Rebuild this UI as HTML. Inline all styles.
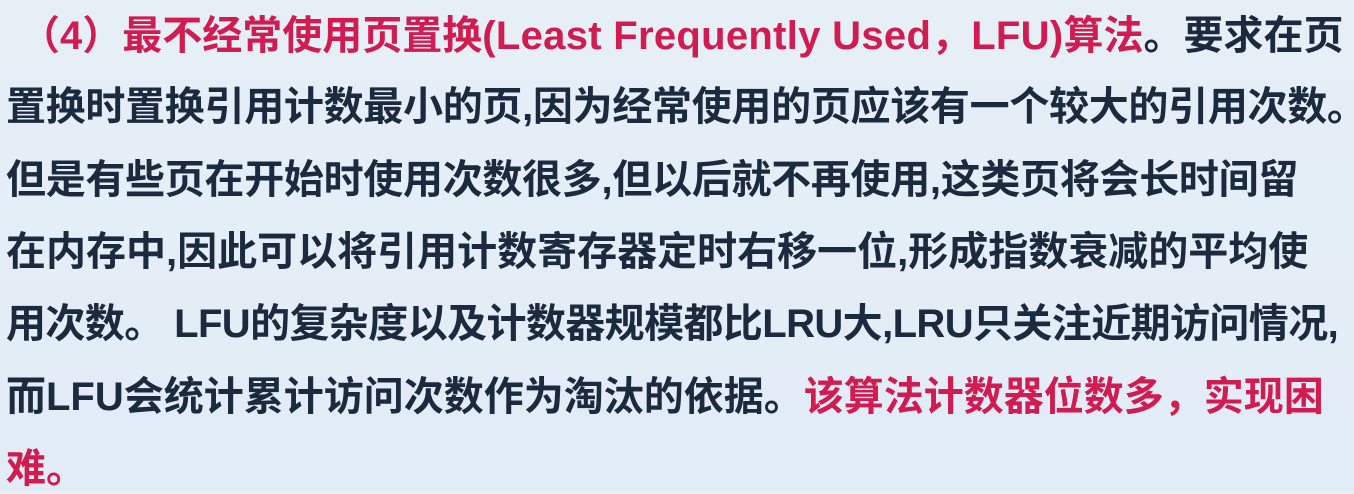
<!DOCTYPE html>
<html><head><meta charset="utf-8"><style>
body{margin:0;width:1354px;height:490px;overflow:hidden;background:linear-gradient(#e6eff6,#e2ecf6);}
.l{position:absolute;left:6px;white-space:nowrap;font-family:"Liberation Sans","Noto Sans CJK SC",sans-serif;font-weight:bold;font-size:40px;line-height:50px;color:#1b2a3e;}
.r{color:#d01c50}
.e{letter-spacing:0.3px}
</style></head><body>
<div class="l" style="top:11px;left:20px"><span class="r">（4）最不经常使用页置换<span class="e">(Least Frequently Used</span>，<span class="e">LFU)</span>算法</span>。要求在页</div>
<div class="l" style="top:82px;letter-spacing:-0.3px">置换时置换引用计数最小的页,因为经常使用的页应该有一个较大的引用次数。</div>
<div class="l" style="top:155px;letter-spacing:-0.3px">但是有些页在开始时使用次数很多,但以后就不再使用,这类页将会长时间留</div>
<div class="l" style="top:227px">在内存中,因此可以将引用计数寄存器定时右移一位,形成指数衰减的平均使</div>
<div class="l" style="top:299px;letter-spacing:-0.6px">用次数。 LFU的复杂度以及计数器规模都比LRU大,LRU只关注近期访问情况,</div>
<div class="l" style="top:372px">而LFU会统计累计访问次数作为淘汰的依据。<span class="r">该算法计数器位数多，实现困</span></div>
<div class="l r" style="top:444px">难。</div>
</body></html>
